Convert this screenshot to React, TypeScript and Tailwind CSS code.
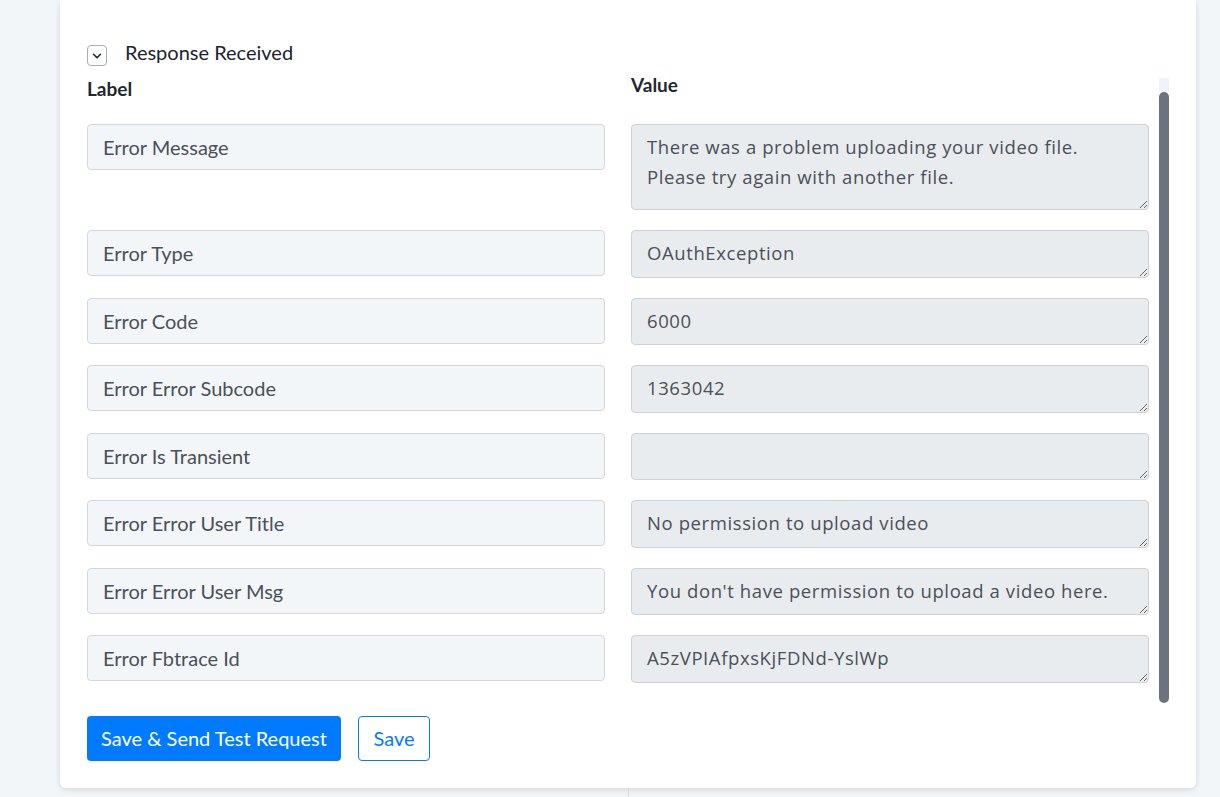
import { ChevronDown } from "lucide-react";

const fields = [
  {
    label: "Error Message",
    value: "There was a problem uploading your video file.\nPlease try again with another file.",
    tall: true,
  },
  { label: "Error Type", value: "OAuthException" },
  { label: "Error Code", value: "6000" },
  { label: "Error Error Subcode", value: "1363042" },
  { label: "Error Is Transient", value: "" },
  { label: "Error Error User Title", value: "No permission to upload video" },
  { label: "Error Error User Msg", value: "You don't have permission to upload a video here." },
  { label: "Error Fbtrace Id", value: "A5zVPIAfpxsKjFDNd-YslWp" },
];

export default function App() {
  return (
    <div className="min-h-screen bg-[#f3f6f9] font-['Lato',sans-serif]">
      <div className="ml-[60px] w-[1136px] rounded-b-[6px] bg-white px-[27px] pt-[45px] pb-[27px] shadow-[0_2px_6px_rgba(0,0,0,0.12)]">
        {/* collapsible section header */}
        <div className="flex h-[21px] items-start gap-[18px]">
          <button className="flex h-[21px] w-[20px] items-center justify-center rounded-[4px] border border-[#a8adb4] bg-white text-[#1f2733]">
            <ChevronDown size={14} strokeWidth={2.8} />
          </button>
          <span className="text-[20px] leading-[14px] text-[#1c2430]">Response Received</span>
        </div>

        <div className="mt-[8px] flex">
          <div className="flex-1 pb-[20px]">
            <div className="grid h-[50px] grid-cols-2 items-start gap-[26px]">
              <div className="pt-[3px] text-[19px] leading-[24px] font-bold text-[#222831]">Label</div>
              <div className="-mt-[1px] text-[19px] leading-[24px] font-bold text-[#222831]">Value</div>
            </div>

            <div className="flex flex-col gap-[20px]">
              {fields.map((f) => (
                <div key={f.label} className="grid grid-cols-2 items-start gap-[26px]">
                  <input
                    readOnly
                    value={f.label}
                    className="h-[46px] w-full rounded-[4px] border border-[#d3d7dc] bg-[#f3f6f9] px-[15px] text-[20px] text-[#4a5058] outline-none"
                  />
                  <textarea
                    readOnly
                    value={f.value}
                    className={`${f.tall ? "h-[86px]" : "h-[47.5px]"} w-full overflow-hidden rounded-[4px] border border-[#cdd2d8] bg-[#e9ecef] px-[15px] py-[7px] font-['Open_Sans',sans-serif] text-[18.5px] leading-[30px] tracking-[0.6px] text-[#4a5058] outline-none`}
                  />
                </div>
              ))}
            </div>
          </div>

          {/* scrollbar */}
          <div className="ml-[10px] flex w-[10px] flex-col pt-[4px]">
            <div className="h-[14px] bg-[#edf4fd]" />
            <div className="flex-1 rounded-full bg-[#6c737c]" />
          </div>
        </div>

        <div className="mt-[13px] flex gap-[17px]">
          <button className="h-[45px] w-[254px] rounded-[4px] bg-[#007bff] text-[20px] text-white">
            Save &amp; Send Test Request
          </button>
          <button className="h-[45px] w-[72px] rounded-[4px] border border-[#007bff] bg-white text-[20px] text-[#007bff]">
            Save
          </button>
        </div>
      </div>
      <div className="ml-[628px] h-[20px] w-px bg-[#d6dade]" />
    </div>
  );
}
